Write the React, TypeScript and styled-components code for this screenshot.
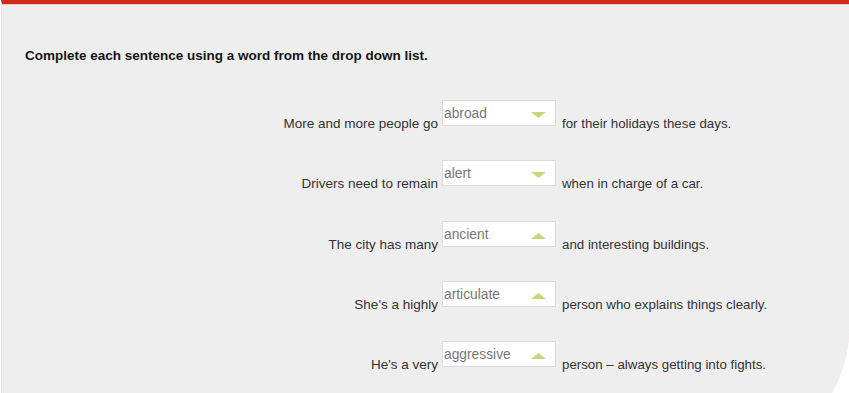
import React from "react";
import styled, { createGlobalStyle } from "styled-components";

const GlobalStyle = createGlobalStyle`
  html,
  body {
    margin: 0;
    padding: 0;
    overflow: hidden;
    background: #fff;
  }
  body {
    font-family: "Liberation Sans", Arial, sans-serif;
  }
`;

const Page = styled.div`
  width: 849px;
  padding-left: 1px;
  box-sizing: border-box;
`;

const Panel = styled.section`
  height: 455px;
  box-sizing: border-box;
  background: #eeeeee;
  border-top: 4px solid #d42a1e;
  border-left: 1px solid #e2e2e2;
  box-shadow: inset 0 1px 0 #f4c9c4;
  border-bottom-right-radius: 125px;
  padding: 44px 0 0 23px;
`;

const Instruction = styled.h1`
  margin: 0 0 37px;
  font-size: 13.5px;
  line-height: 15px;
  font-weight: 700;
  color: #161616;
`;

const Questions = styled.div`
  display: grid;
  grid-template-columns: 417px 114px auto;
  grid-auto-rows: 60.25px;
`;

const Before = styled.span`
  padding: 16px 4px 0 0;
  text-align: right;
  font-size: 13.5px;
  line-height: 15px;
  color: #333;
  white-space: nowrap;
`;

const After = styled.span`
  padding: 16px 0 0 6px;
  font-size: 13.3px;
  line-height: 15px;
  color: #333;
  white-space: nowrap;
`;

const Dropdown = styled.div`
  height: 26px;
  box-sizing: border-box;
  display: flex;
  justify-content: space-between;
  align-items: flex-start;
  padding: 5px 9px 0 1px;
  background: #fff;
  border: 1px solid #dcdcdc;
  font-size: 13.8px;
  line-height: 15px;
  color: #777;
`;

const Arrow = styled.svg`
  margin-top: 6px;
  flex: none;
`;

function Caret({ up }: { up: boolean }) {
  return (
    <Arrow width="15" height="6" viewBox="0 0 15 6">
      <polygon points={up ? "7.5,0 15,6 0,6" : "0,0 15,0 7.5,6"} fill="#c6d87c" />
    </Arrow>
  );
}

const items = [
  { before: "More and more people go", word: "abroad", after: "for their holidays these days.", up: false },
  { before: "Drivers need to remain", word: "alert", after: "when in charge of a car.", up: false },
  { before: "The city has many", word: "ancient", after: "and interesting buildings.", up: true },
  { before: "She's a highly", word: "articulate", after: "person who explains things clearly.", up: true },
  { before: "He's a very", word: "aggressive", after: "person \u2013 always getting into fights.", up: true },
];

export default function App() {
  return (
    <Page>
      <GlobalStyle />
      <Panel>
        <Instruction>Complete each sentence using a word from the drop down list.</Instruction>
        <Questions>
          {items.map((it) => (
            <React.Fragment key={it.word}>
              <Before>{it.before}</Before>
              <Dropdown>
                <span>{it.word}</span>
                <Caret up={it.up} />
              </Dropdown>
              <After>{it.after}</After>
            </React.Fragment>
          ))}
        </Questions>
      </Panel>
    </Page>
  );
}
